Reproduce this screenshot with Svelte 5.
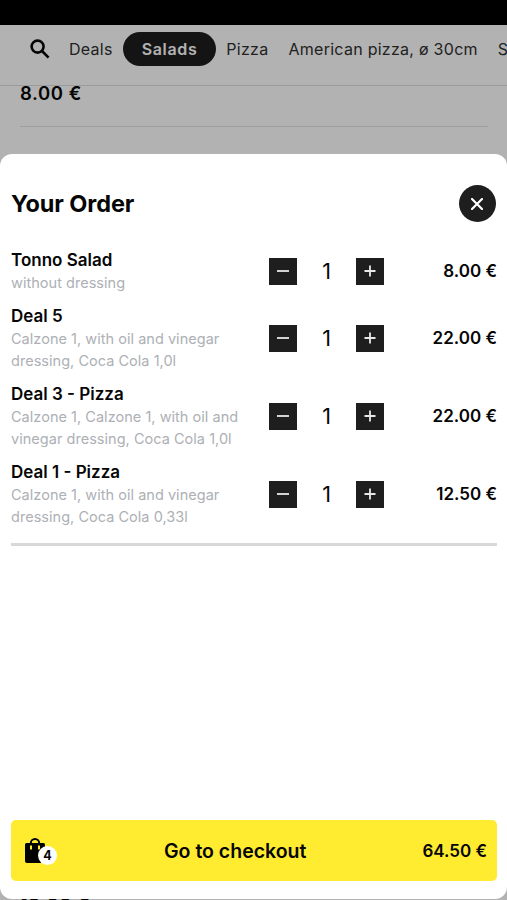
<script lang="ts">
  interface Item {
    name: string;
    details: string[];
    count: number;
    price: number;
  }

  const categories: string[] = ["Deals", "Salads", "Pizza", "American pizza, ø 30cm", "Snacks"];

  let active: string = $state("Salads");
  let open: boolean = $state(true);
  let items: Item[] = $state([
    { name: "Tonno Salad", details: ["without dressing"], count: 1, price: 8 },
    { name: "Deal 5", details: ["Calzone 1, with oil and vinegar", "dressing, Coca Cola 1,0l"], count: 1, price: 22 },
    { name: "Deal 3 - Pizza", details: ["Calzone 1, Calzone 1, with oil and", "vinegar dressing, Coca Cola 1,0l"], count: 1, price: 22 },
    { name: "Deal 1 - Pizza", details: ["Calzone 1, with oil and vinegar", "dressing, Coca Cola 0,33l"], count: 1, price: 12.5 },
  ]);

  let total: number = $derived(items.reduce((sum, item) => sum + item.count * item.price, 0));
  let amount: number = $derived(items.reduce((sum, item) => sum + item.count, 0));

  function change(item: Item, step: number): void {
    item.count = Math.max(0, item.count + step);
  }

  function format(value: number): string {
    return value.toFixed(2) + " €";
  }
</script>

<div class="screen">
  <div class="status-bar"></div>
  <nav class="categories">
    <svg class="search" viewBox="0 0 20 20" aria-hidden="true">
      <circle cx="7.6" cy="7.6" r="6" />
      <path d="M12 12L18.6 18.6" />
    </svg>
    {#each categories as category}
      <button class="category" class:active={category === active} onclick={() => (active = category)}>
        {category}
      </button>
    {/each}
  </nav>
  <main class="menu">
    <p class="menu-price">8.00 €</p>
    <hr />
  </main>
  <p class="menu-price last">12.00 €</p>

  {#if open}
    <div class="overlay"></div>
    <section class="sheet">
      <header>
        <h1>Your Order</h1>
        <button class="close" aria-label="Close" onclick={() => (open = false)}>
          <svg viewBox="0 0 12 12"><path d="M1 1L11 11M11 1L1 11" /></svg>
        </button>
      </header>

      <ul class="items">
        {#each items as item}
          <li>
            <div class="info">
              <h2>{item.name}</h2>
              {#each item.details as line}
                <p>{line}</p>
              {/each}
            </div>
            <div class="counter">
              <button aria-label="Less" onclick={() => change(item, -1)}>
                <svg viewBox="0 0 12 12"><path d="M0 6H12" /></svg>
              </button>
              <span>{item.count}</span>
              <button aria-label="More" onclick={() => change(item, 1)}>
                <svg viewBox="0 0 12 12"><path d="M0.5 6H11.5M6 0.5V11.5" /></svg>
              </button>
            </div>
            <span class="price">{format(item.count * item.price)}</span>
          </li>
        {/each}
      </ul>

      <button class="checkout">
        <span class="bag">
          <svg viewBox="0 0 20 25" aria-hidden="true">
            <path class="handle" d="M5.8 7V5.2a4.2 4.2 0 0 1 8.4 0V7" />
            <path d="M1.5 5H18.5Q20 5 20 6.5V23Q20 25 18 25H2Q0 25 0 23V6.5Q0 5 1.5 5Z" />
            <path class="slot" d="M6 7.5V11.5M14 7.5V11.5" />
          </svg>
          <span class="badge">{amount}</span>
        </span>
        <span class="label">Go to checkout</span>
        <span class="total">{format(total)}</span>
      </button>
    </section>
  {/if}
</div>

<style>
  :global(body) {
    margin: 0;
    overflow: hidden;
  }

  .screen {
    position: relative;
    height: 900px;
    overflow: hidden;
    background-color: white;
    color: #060606;
    font-family: Inter, "Liberation Sans", sans-serif;
  }

  h1, h2, p, ul {
    margin: 0;
    padding: 0;
  }

  button {
    padding: 0;
    border: none;
    background: none;
    color: inherit;
    font-family: inherit;
  }

  svg {
    display: block;
    fill: none;
    stroke: currentColor;
  }

  .status-bar {
    height: 25px;
    background-color: black;
  }

  .categories {
    display: flex;
    align-items: center;
    box-sizing: border-box;
    height: 61px;
    padding: 0 0 12px 30px;
    border-bottom: 1px solid #dedede;
    overflow: hidden;
  }

  .search {
    flex: none;
    width: 20px;
    height: 20px;
    margin-right: 9px;
    stroke-width: 2.6;
  }

  .category {
    flex: none;
    height: 34px;
    padding: 0 10px;
    border-radius: 17px;
    color: #303030;
    font-size: 16px;
    letter-spacing: 0.27px;
    white-space: nowrap;
  }

  .category.active {
    padding: 0 19px;
    background-color: #1e1e1e;
    color: white;
    font-weight: 600;
    letter-spacing: 0.65px;
  }

  .menu {
    height: 811px;
    padding: 0 19px 0 20px;
  }

  .menu-price {
    height: 40px;
    font-size: 18.5px;
    font-weight: 600;
    line-height: 14px;
    letter-spacing: 0.55px;
  }

  .menu-price.last {
    padding-left: 20px;
    line-height: 16px;
  }

  hr {
    height: 1px;
    margin: 0;
    border: none;
    background-color: #e2e2e2;
  }

  .overlay {
    position: absolute;
    inset: 0;
    background-color: rgba(0, 0, 0, 0.3);
  }

  .sheet {
    position: absolute;
    inset: 154px 0 1px;
    display: flex;
    flex-direction: column;
    box-sizing: border-box;
    padding: 31px 10px 18px 11px;
    border-radius: 12px;
    background-color: white;
  }

  header {
    display: flex;
    align-items: center;
    justify-content: space-between;
    height: 37px;
    padding-right: 1px;
  }

  h1 {
    font-size: 23.5px;
    font-weight: 650;
    letter-spacing: -0.1px;
  }

  .close {
    display: flex;
    align-items: center;
    justify-content: center;
    width: 37px;
    height: 37px;
    border-radius: 50%;
    background-color: #1e1e1e;
    color: white;
  }

  .close svg {
    width: 12px;
    height: 12px;
    margin-right: 1px;
    stroke-width: 2.2;
    stroke-linecap: round;
  }

  .items {
    display: flex;
    flex-direction: column;
    gap: 10px;
    margin-top: 26px;
    padding-bottom: 15px;
    border-bottom: 3px solid #d8d8d8;
    list-style: none;
  }

  li {
    display: flex;
    align-items: center;
  }

  .info {
    width: 258px;
  }

  h2 {
    font-size: 17px;
    font-weight: 600;
    line-height: 24px;
    white-space: nowrap;
  }

  .info p {
    color: #adb0b5;
    font-size: 14.5px;
    line-height: 22px;
    letter-spacing: 0.03px;
    white-space: nowrap;
  }

  .counter {
    display: flex;
    align-items: center;
    justify-content: space-between;
    width: 115px;
  }

  .counter button {
    display: flex;
    align-items: center;
    justify-content: center;
    width: 28px;
    height: 27px;
    background-color: #1e1e1e;
    color: #e8e8e8;
  }

  .counter svg {
    width: 12px;
    height: 12px;
    stroke-width: 1.8;
  }

  .counter span {
    font-size: 21.5px;
    line-height: 24px;
    padding-bottom: 1px;
  }

  .price {
    flex: 1;
    font-size: 17px;
    font-weight: 600;
    text-align: right;
  }

  .checkout {
    display: grid;
    grid-template-columns: 139px auto 1fr;
    align-items: center;
    height: 61px;
    margin-top: auto;
    padding: 0 10px 0 14px;
    border-radius: 5px;
    background-color: #ffec31;
  }

  .bag {
    position: relative;
    width: 32px;
    height: 25px;
  }

  .bag svg {
    width: 20px;
    height: 25px;
  }

  .bag path {
    fill: black;
    stroke: none;
  }

  .bag .handle {
    fill: none;
    stroke: black;
    stroke-width: 2;
  }

  .bag .slot {
    stroke: #ffec31;
    stroke-width: 2;
  }

  .badge {
    position: absolute;
    right: 0;
    bottom: -2px;
    width: 19px;
    height: 19px;
    border-radius: 50%;
    background-color: white;
    font-size: 12.5px;
    font-weight: 700;
    line-height: 19px;
    text-align: center;
  }

  .label {
    font-size: 19.5px;
    font-weight: 600;
  }

  .total {
    font-size: 17px;
    font-weight: 600;
    text-align: right;
  }
</style>
